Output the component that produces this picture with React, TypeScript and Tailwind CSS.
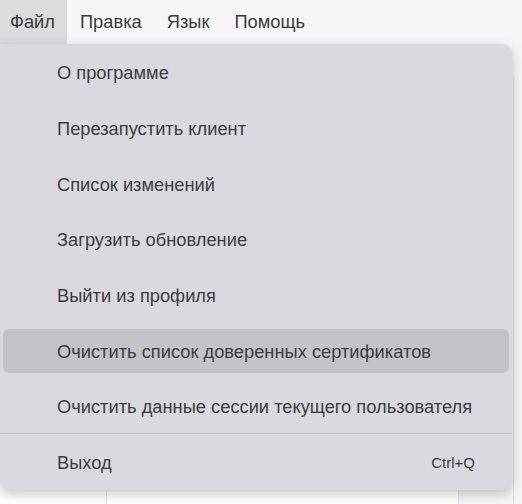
import React from 'react';

type MenuItem = {
  label: string;
  shortcut?: string;
  active?: boolean;
  separatorBefore?: boolean;
};

const items: MenuItem[] = [
  { label: 'О программе' },
  { label: 'Перезапустить клиент' },
  { label: 'Список изменений' },
  { label: 'Загрузить обновление' },
  { label: 'Выйти из профиля' },
  { label: 'Очистить список доверенных сертификатов', active: true },
  { label: 'Очистить данные сессии текущего пользователя' },
  { label: 'Выход', shortcut: 'Ctrl+Q', separatorBefore: true },
];

const topMenus = ['Файл', 'Правка', 'Язык', 'Помощь'];

const App: React.FC = () => {
  return (
    <div className="relative w-[522px] h-[504px] overflow-hidden bg-white font-['Liberation_Sans',Arial,sans-serif] text-[#3a3a3a]">
      {/* menubar */}
      <div className="flex h-[44px] items-center bg-[#f7f7f9] text-[18.3px]">
        {topMenus.map((m, i) => (
          <div
            key={m}
            className={`flex h-full items-center ${i === 0 ? 'bg-[#dcdcdf] pl-[10px] pr-[12px]' : 'pl-[13px] pr-[12px]'}`}
          >
            {m}
          </div>
        ))}
      </div>

      {/* app content behind the menu */}
      <div className="flex h-[460px]">
        <div className="w-[107px] border-r border-[#e4e4e8] bg-white" />
        <div className="w-[352px] border-r border-[#e4e4e8] bg-white" />
        <div className="flex-1 bg-[#f5f5f7] pt-[34px]">
          <div className="ml-[54px] h-full border-l border-[#dedee2]" />
        </div>
      </div>

      {/* dropdown */}
      <div className="absolute left-0 top-[44px] w-[512px] h-[446px] rounded-b-[10px] rounded-tr-[10px] bg-[#dad9df] pt-[7px] shadow-[0_4px_12px_rgba(0,0,0,0.22)]">
        {items.map((it, i) => (
          <React.Fragment key={it.label}>
            {it.separatorBefore && <div className="mt-[4px] h-px bg-[#c9c8ce]" />}
            <div
              className={`mx-[3px] flex h-[44px] items-center justify-between rounded-[6px] pl-[54px] pr-[34px] text-[18.3px] text-[#3c3c3c] ${
                it.active ? 'bg-[#c4c3c9]' : ''
              } ${i === 0 ? '' : it.separatorBefore ? 'mt-[7px]' : 'mt-[11.7px]'}`}
            >
              <span>{it.label}</span>
              {it.shortcut && <span className="text-[15px]">{it.shortcut}</span>}
            </div>
          </React.Fragment>
        ))}
      </div>
    </div>
  );
};

export default App;
